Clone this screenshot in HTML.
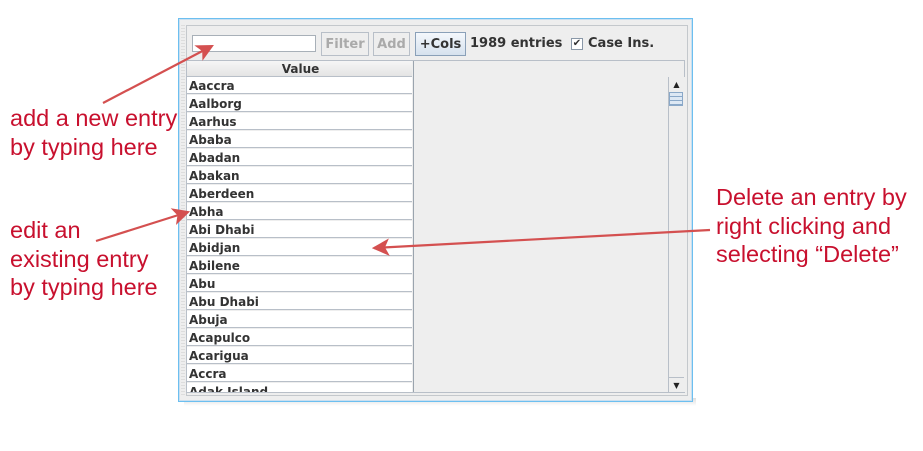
<!DOCTYPE html>
<html><head><style>
body{margin:0;width:923px;height:451px;background:#fff;position:relative;overflow:hidden;font-family:"DejaVu Sans","Liberation Sans",sans-serif}
.a{position:absolute}
.ann{position:absolute;font-family:"Liberation Sans",sans-serif;font-size:23.5px;color:#c8102e;line-height:28.5px;white-space:nowrap}
.row{position:absolute;left:0;width:225px;height:17px;border-bottom:1px solid #b8bfc8;background:#fff;font-size:12px;font-weight:bold;color:#333;line-height:18px;padding-left:2px;box-sizing:border-box}
.btn{position:absolute;top:32px;height:24px;box-sizing:border-box;border:1px solid #b8bfc8;font-size:13px;font-weight:bold;color:#aaa;text-align:center;line-height:23px;background:#eee}
</style></head><body>
<div class="a" style="left:184px;top:398px;width:512px;height:8px;background:linear-gradient(#ddd,#fff)"></div>
<div class="a" style="left:178px;top:18px;width:515px;height:384px;border:1px solid #6cbff0;box-sizing:border-box;background:#eee"></div>
<div class="a" style="left:179px;top:19px;width:513px;height:382px;border:1px solid #c9dff0;box-sizing:border-box"></div>
<div class="a" style="left:181px;top:25px;width:4px;height:370px;background:repeating-linear-gradient(#ddd 0 1px,#eee 1px 3px)"></div>
<div class="a" style="left:186px;top:25px;width:502px;height:371px;border:1px solid #c4c8cc;box-sizing:border-box"></div>
<div class="a" style="left:192px;top:35px;width:124px;height:17px;border:1px solid #a8b0b8;background:#fff;box-sizing:border-box"></div>
<div class="btn" style="left:321px;width:48px">Filter</div>
<div class="btn" style="left:373px;width:37px">Add</div>
<div class="btn" style="left:415px;width:51px;color:#333;background:linear-gradient(#f4f8fc,#d6e2ee);border-color:#8aa0b8">+Cols</div>
<div class="a" style="left:470px;top:36px;font-size:13px;font-weight:bold;color:#333">1989 entries</div>
<div class="a" style="left:571px;top:38px;width:12px;height:12px;border:1px solid #8a98a8;box-sizing:border-box;background:#fff;font-size:10px;line-height:10px;text-align:center;color:#333">✔</div>
<div class="a" style="left:588px;top:36px;font-size:13px;font-weight:bold;color:#333">Case Ins.</div>
<div class="a" style="left:186px;top:60px;width:499px;height:333px;border:1px solid #b8bfc8;box-sizing:border-box;background:#eee"></div>
<div class="a" style="left:187px;top:61px;width:226px;height:331px;overflow:hidden;border-right:1px solid #9aa4ae">
<div class="row" style="top:0;height:16px;background:linear-gradient(#f6f6f6,#e4e4e4);text-align:center;line-height:17px">Value</div>
<div class="row" style="top:16px">Aaccra</div><div class="row" style="top:34px">Aalborg</div><div class="row" style="top:52px">Aarhus</div><div class="row" style="top:70px">Ababa</div><div class="row" style="top:88px">Abadan</div><div class="row" style="top:106px">Abakan</div><div class="row" style="top:124px">Aberdeen</div><div class="row" style="top:142px">Abha</div><div class="row" style="top:160px">Abi Dhabi</div><div class="row" style="top:178px">Abidjan</div><div class="row" style="top:196px">Abilene</div><div class="row" style="top:214px">Abu</div><div class="row" style="top:232px">Abu Dhabi</div><div class="row" style="top:250px">Abuja</div><div class="row" style="top:268px">Acapulco</div><div class="row" style="top:286px">Acarigua</div><div class="row" style="top:304px">Accra</div><div class="row" style="top:322px">Adak Island</div>
</div>
<div class="a" style="left:668px;top:77px;width:16px;height:315px;border-left:1px solid #b8bfc8;background:#eee"></div>
<div class="a" style="left:669px;top:77px;width:15px;height:15px;font-size:8px;text-align:center;line-height:15px;color:#222">▲</div>
<div class="a" style="left:669px;top:92px;width:14px;height:14px;border:1px solid #8aa8c8;box-sizing:border-box;background:repeating-linear-gradient(#dde8f4 0 3px,#8aa8c8 3px 4px)"></div>
<div class="a" style="left:669px;top:377px;width:15px;height:15px;border-top:1px solid #b8bfc8;font-size:8px;text-align:center;line-height:15px;color:#222">▼</div>
<div class="ann" style="left:10px;top:104px">add a new entry<br>by typing here</div>
<div class="ann" style="left:10px;top:216px">edit an<br>existing entry<br>by typing here</div>
<div class="ann" style="left:716px;top:183px">Delete an entry by<br>right clicking and<br>selecting “Delete”</div>
<svg class="a" style="left:0;top:0" width="923" height="451">
<defs><marker id="m" markerWidth="8" markerHeight="8" refX="7" refY="4" orient="auto"><path d="M0,0 L8,4 L0,8 L2,4z" fill="#d45050"/></marker></defs>
<g stroke="#d45050" stroke-width="2.2" fill="none" marker-end="url(#m)">
<line x1="103" y1="103" x2="212" y2="46"/>
<line x1="96" y1="241" x2="188" y2="212"/>
<line x1="710" y1="230" x2="374" y2="248"/>
</g></svg>
</body></html>
